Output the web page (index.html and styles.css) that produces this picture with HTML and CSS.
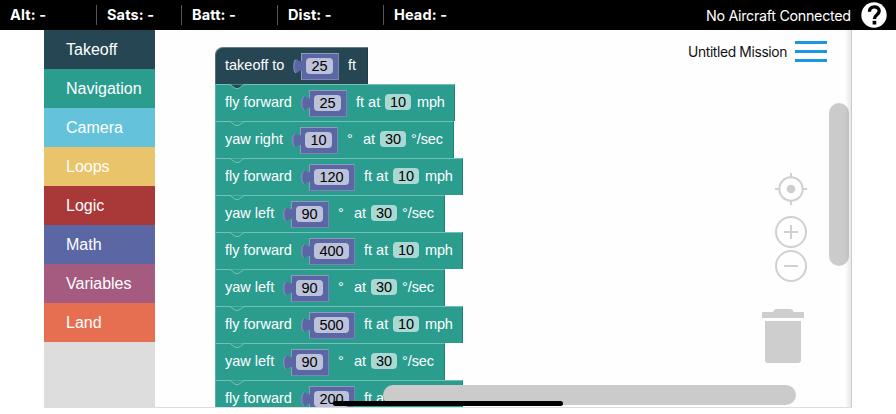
FILE: index.html
```html
<!DOCTYPE html>
<html lang="en">
<head>
<meta charset="utf-8">
<title>Untitled Mission</title>
<link rel="stylesheet" href="styles.css">
</head>
<body>
<svg class="defs" width="0" height="0" aria-hidden="true">
  <symbol id="tab" viewBox="0 0 9 27"><path fill="#5b67a5" d="M9 8C6.500 9.500 5.500 6.500 3 6.500C.8 6.500.8 10 .8 13.500S.8 20 3 20S6 16.500 9 18Z"/><path fill="none" stroke="#8f98c4" d="M3.200 6.700C1 7.500.8 11 .8 13.500s.2 5.600 2.200 6.300"/></symbol>
  <symbol id="notch" viewBox="0 0 20 6"><path d="M0 .5H3L8 4.200Q10 5 12 4.200L17 .5H20"/></symbol>
</svg>
<header class="status">
  <div class="stat s1">Alt: -</div>
  <div class="stat s2">Sats: -</div>
  <div class="stat s3">Batt: -</div>
  <div class="stat s4">Dist: -</div>
  <div class="stat s5">Head: -</div>
  <div class="link">No Aircraft Connected</div>
  <svg class="help" viewBox="0 0 26 26"><circle cx="13" cy="13" r="12.700" fill="#fff"/><path d="M8.400 9.800C8.400 3.200 18.200 3.400 18.200 9C18.200 12.800 13.400 12.600 13.400 17" fill="none" stroke="#000" stroke-width="3.300"/><rect x="11.600" y="18.800" width="3.700" height="3.700" fill="#000"/></svg>
</header>
<main class="editor">
  <nav class="toolbox">
    <div class="cat takeoff">Takeoff</div>
    <div class="cat navigation">Navigation</div>
    <div class="cat camera">Camera</div>
    <div class="cat loops">Loops</div>
    <div class="cat logic">Logic</div>
    <div class="cat math">Math</div>
    <div class="cat variables">Variables</div>
    <div class="cat land">Land</div>
  </nav>
  <section class="canvas">
    <div class="stack">
      <div class="block start"><span class="l-to">takeoff to</span><svg class="tab"><use href="#tab"/></svg><span class="num"><b>25</b></span><span class="ft">ft</span></div>
      <div class="block"><svg class="notch first"><use href="#notch"/></svg><span class="l-fly">fly forward</span><svg class="tab"><use href="#tab"/></svg><span class="num"><b>25</b></span><span class="ftat">ft at</span><b class="pill">10</b><span class="mph">mph</span></div>
      <div class="block yaw"><svg class="notch"><use href="#notch"/></svg><span class="l-right">yaw right</span><svg class="tab"><use href="#tab"/></svg><span class="num"><b>10</b></span><span class="deg">°</span><span class="at">at</span><b class="pill">30</b><span class="sec">°/sec</span></div>
      <div class="block"><svg class="notch"><use href="#notch"/></svg><span class="l-fly">fly forward</span><svg class="tab"><use href="#tab"/></svg><span class="num wide"><b>120</b></span><span class="ftat">ft at</span><b class="pill">10</b><span class="mph">mph</span></div>
      <div class="block yaw"><svg class="notch"><use href="#notch"/></svg><span class="l-left">yaw left</span><svg class="tab"><use href="#tab"/></svg><span class="num"><b>90</b></span><span class="deg">°</span><span class="at">at</span><b class="pill">30</b><span class="sec">°/sec</span></div>
      <div class="block"><svg class="notch"><use href="#notch"/></svg><span class="l-fly">fly forward</span><svg class="tab"><use href="#tab"/></svg><span class="num wide"><b>400</b></span><span class="ftat">ft at</span><b class="pill">10</b><span class="mph">mph</span></div>
      <div class="block yaw"><svg class="notch"><use href="#notch"/></svg><span class="l-left">yaw left</span><svg class="tab"><use href="#tab"/></svg><span class="num"><b>90</b></span><span class="deg">°</span><span class="at">at</span><b class="pill">30</b><span class="sec">°/sec</span></div>
      <div class="block"><svg class="notch"><use href="#notch"/></svg><span class="l-fly">fly forward</span><svg class="tab"><use href="#tab"/></svg><span class="num wide"><b>500</b></span><span class="ftat">ft at</span><b class="pill">10</b><span class="mph">mph</span></div>
      <div class="block yaw"><svg class="notch"><use href="#notch"/></svg><span class="l-left">yaw left</span><svg class="tab"><use href="#tab"/></svg><span class="num"><b>90</b></span><span class="deg">°</span><span class="at">at</span><b class="pill">30</b><span class="sec">°/sec</span></div>
      <div class="block"><svg class="notch"><use href="#notch"/></svg><span class="l-fly">fly forward</span><svg class="tab"><use href="#tab"/></svg><span class="num wide"><b>200</b></span><span class="ftat">ft at</span><b class="pill">10</b><span class="mph">mph</span></div>
    </div>
    <div class="mission"><span>Untitled Mission</span><svg width="32" height="22" viewBox="0 0 32 22"><path d="M0 1.500H32M0 10.500H32M0 19.500H32" stroke="#1b96e3" stroke-width="3"/></svg></div>
    <div class="tools">
      <svg class="center" width="32" height="32" viewBox="0 0 32 32"><circle cx="16" cy="16" r="11.700"/><path d="M16 0V4.500M16 27.500V32M0 16H4.500M27.500 16H32"/><circle class="dot" cx="16" cy="16" r="4.300"/></svg>
      <svg class="zoom-in" width="32" height="32" viewBox="0 0 32 32"><circle cx="16" cy="16" r="15"/><path d="M9 16H23M16 9V23"/></svg>
      <svg width="32" height="32" viewBox="0 0 32 32"><circle cx="16" cy="16" r="15"/><path d="M9 16H23"/></svg>
    </div>
    <svg class="trash" width="42" height="54" viewBox="0 0 42 54"><path d="M0 3H11Q12 0 14.500 0H28Q30.500 0 31.500 3H42V9H0ZM3 12H39V51Q39 54 36 54H6Q3 54 3 51Z" fill="#cecece"/></svg>
    <div class="scroll-y"></div>
    <div class="scroll-x"></div>
    <div class="edge"></div>
  </section>
</main>
<div class="home"></div>
</body>
</html>
```

FILE: styles.css
```css
* { box-sizing: border-box; }
body { margin: 0; width: 896px; height: 414px; overflow: hidden; background: #fff; position: relative; font-family: "Liberation Sans", Arial, sans-serif; }
.defs { position: absolute; }
.status { display: flex; align-items: center; height: 30px; background: #000; color: #fff; font-family: Inter, sans-serif; font-size: 14.5px; padding-left: 10px; white-space: nowrap; }
.stat { height: 20px; line-height: 20px; font-weight: 700; border-left: 1px solid #555; padding-left: 10px; letter-spacing: .12px; }
.s1 { width: 86px; padding-left: 0; border-left: 0; }
.s2 { width: 85px; }
.s3 { width: 96px; }
.s4 { width: 106px; }
.link { margin-left: auto; width: 145px; font-size: 14.3px; letter-spacing: -.3px; }
.help { width: 26px; height: 26px; margin: 0 9px 0 10px; }
.editor { display: flex; width: 808px; height: 378px; margin-left: 44px; }
.toolbox { width: 111px; background: #ddd; flex: none; }
.cat { height: 39px; line-height: 39px; padding-left: 22px; color: #fff; font-size: 16px; }
.takeoff { background: #264653; }
.navigation { background: #2a9d8f; }
.camera { background: #64c3da; }
.loops { background: #e9c46a; }
.logic { background: #a93838; }
.math { background: #5b67a5; }
.variables { background: #a55b80; }
.land { background: #e76f51; }
.canvas { position: relative; flex: 1; overflow: hidden; background: #fefefe; border-bottom: 1px solid #ddd; }
.stack { display: flex; flex-direction: column; align-items: flex-start; padding: 17px 0 0 60px; }
.block { position: relative; display: flex; flex: none; align-items: center; height: 37px; padding: 0 9px 2px; background: #2a9d8f; color: #fff; font-size: 14.5px; line-height: 17px; white-space: nowrap; border-top: 1px solid #74c0b7; border-left: 1px solid #55b1a5; border-right: 1px solid #218176; }
.yaw { padding-right: 10px; }
.start { padding-right: 11px; background: #264653; border-color: #66808a #203b46 #203b46 #51707c; border-top-left-radius: 8px; }
.notch { position: absolute; left: 11px; top: -1px; width: 20px; height: 6px; fill: #2a9d8f; stroke: #74c0b7; }
.notch.first { fill: #264653; }
.block span, .pill { flex: none; }
.l-to { width: 68px; }
.l-fly { width: 76px; }
.l-right { width: 67px; }
.l-left { width: 58px; }
.tab { flex: none; width: 9px; height: 27px; margin: 2px -1px 0 0; position: relative; z-index: 1; }
.num { width: 38px; height: 27px; margin-top: 2px; padding: 4px 0 0 4px; background: #5b67a5; border: 1px solid #9299b9; border-right-color: #7c86b5; border-bottom-color: #7c86b5; }
.wide { width: 46px; }
.num b, .pill { display: block; width: 27px; height: 16px; border-radius: 4px; background: #bdc2db; color: #000; font-weight: 400; text-align: center; line-height: 17px; }
.wide b { width: 35px; }
.pill { background: #aad8d2; width: 26px; }
.ft { margin-left: 9px; }
.ftat { margin-left: 9px; width: 29px; }
.mph { margin-left: 6px; letter-spacing: -.15px; }
.deg { margin-left: 9px; width: 16px; }
.at { width: 17px; }
.sec { margin-left: 5px; letter-spacing: -.1px; }
.mission { position: absolute; right: 25px; top: 11px; display: flex; align-items: center; font: 14px/22px Inter, sans-serif; color: #111; }
.mission span { width: 107px; white-space: nowrap; font-size: 13.8px; letter-spacing: -.35px; }
.tools { position: absolute; left: 620px; top: 143px; display: flex; flex-direction: column; fill: none; stroke: #d0d0d0; stroke-width: 2; }
.tools .center { margin-bottom: 11px; }
.tools .zoom-in { margin-bottom: 2px; }
.tools .dot { fill: #cecece; stroke: none; }
.trash { position: absolute; left: 607px; top: 279px; }
.scroll-y, .scroll-x { position: absolute; border-radius: 10px; background: #cbcbcb; }
.scroll-y { left: 674px; top: 73px; width: 20px; height: 163px; }
.scroll-x { left: 228px; top: 355px; width: 413px; height: 20px; }
.edge { position: absolute; top: 0; bottom: 0; right: 0; width: 7px; border-right: 1px solid #ccc; background: linear-gradient(to right, transparent, rgba(0, 0, 0, .09)); }
.home { position: absolute; left: 333px; top: 401px; width: 230px; height: 5px; border-radius: 3px; background: #000; }
```
